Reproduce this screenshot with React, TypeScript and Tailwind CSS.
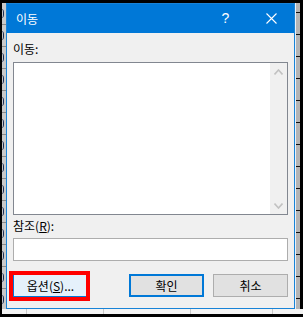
import { ReactNode } from "react"

const font = { fontFamily: '"Noto Sans CJK KR", "Noto Sans", sans-serif' }

function Chevron({ up }: { up?: boolean }) {
  return (
    <svg width="9" height="6" viewBox="0 0 9 6" className="block">
      <path
        d={up ? "M0.5 5.5 L4.5 1 L8.5 5.5" : "M0.5 0.5 L4.5 5 L8.5 0.5"}
        fill="none"
        stroke="#c2c2c2"
        strokeWidth="1.6"
      />
    </svg>
  )
}

function Button({ children, primary, className = "" }: { children: ReactNode; primary?: boolean; className?: string }) {
  return (
    <div
      className={`w-[75px] h-[23px] flex items-center justify-center text-[12px] leading-none text-black bg-[#e1e1e1] ${
        primary ? "border-2 border-[#0078d7]" : "border border-[#adadad]"
      } ${className}`}
    >
      {children}
    </div>
  )
}

export default function App() {
  return (
    <div className="w-[303px] h-[317px] bg-black pt-[3px] pl-[2px] pb-[3px] overflow-hidden" style={font}>
      <div className="flex flex-col w-[301px] h-[311px]">
        <div className="flex">
          {/* sheet column behind, left */}
          <div className="w-[4px] h-[306px] bg-[#c9c9c9] flex flex-col overflow-hidden">
            {Array.from({ length: 14 }).map((_, i) => (
              <div key={i} className="h-[22px] shrink-0 flex items-center border-b border-[#8a8a8a]">
                <div className="w-[3px] h-[9px] rounded-r-full border-r-[1.5px] border-[#1d2f55] -ml-[1px]" />
              </div>
            ))}
          </div>

          {/* dialog */}
          <div className="w-[289px] h-[306px] border border-[#1883d7] flex flex-col">
            <div className="h-[29px] bg-[#0078d7] flex items-center text-white">
              <span className="pl-[9px] text-[12px]">이동</span>
              <div className="ml-auto w-[45px] h-full flex items-center justify-center text-[14px] font-['Liberation_Sans']">?</div>
              <div className="w-[46px] h-full flex items-center justify-center">
                <svg width="11" height="11" viewBox="0 0 11 11">
                  <path d="M0.5 0.5 L10.5 10.5 M10.5 0.5 L0.5 10.5" stroke="white" strokeWidth="1.1" />
                </svg>
              </div>
            </div>

            <div className="flex-1 bg-[#f0f0f0] px-[6px] pt-[8px] flex flex-col">
              <div className="h-[16px] text-[12px] leading-[16px] text-black">이동:</div>
              <div className="mt-[5px] h-[153px] border border-[#828790] bg-white flex">
                <div className="flex-1" />
                <div className="w-[17px] bg-[#f0f0f0] flex flex-col justify-between">
                  <div className="h-[17px] flex items-center justify-center">
                    <Chevron up />
                  </div>
                  <div className="h-[17px] flex items-center justify-center">
                    <Chevron />
                  </div>
                </div>
              </div>

              <div className="mt-[3px] h-[16px] text-[12px] leading-[16px] text-black">
                참조(<span className="underline">R</span>):
              </div>
              <div className="mt-[4px] h-[23px] border border-[#adadad] bg-white" />

              <div className="mt-[13px] flex">
                <div className="relative">
                  <div className="w-[75px] h-[23px] flex items-center justify-center text-[12px] leading-none text-black bg-[#e5f1fb] border border-[#0078d7]">
                    옵션(<span className="underline">S</span>)...
                  </div>
                  <div className="absolute -left-[4px] -top-[3px] -right-[2px] -bottom-[4px] border-4 border-[#ff0000]" />
                </div>
                <Button primary className="ml-auto">
                  확인
                </Button>
                <Button className="ml-[9px]">취소</Button>
              </div>
            </div>
          </div>

          {/* sheet column behind, right */}
          <div className="w-[8px] h-[306px] flex">
            <div className="w-[1px] bg-[#e8f1fa]" />
            <div className="w-[4px] bg-[#b4b4b4] bg-[repeating-linear-gradient(to_bottom,transparent_0px,transparent_9px,#111_9px,#111_10px,transparent_10px,transparent_22px)]" />
            <div className="w-[3px] bg-black" />
          </div>
        </div>

        {/* sheet rows behind, bottom */}
        <div className="h-[5px] bg-[#f3f3f3] flex">
          <div className="w-[25px] border-r border-[#c8c8c8]" />
          <div className="w-[77px] border-r border-[#c8c8c8]" />
          <div className="w-[87px] border-r border-[#c8c8c8]" />
          <div className="w-[82px] border-r border-[#c8c8c8]" />
          <div className="flex-1" />
        </div>
      </div>
    </div>
  )
}
